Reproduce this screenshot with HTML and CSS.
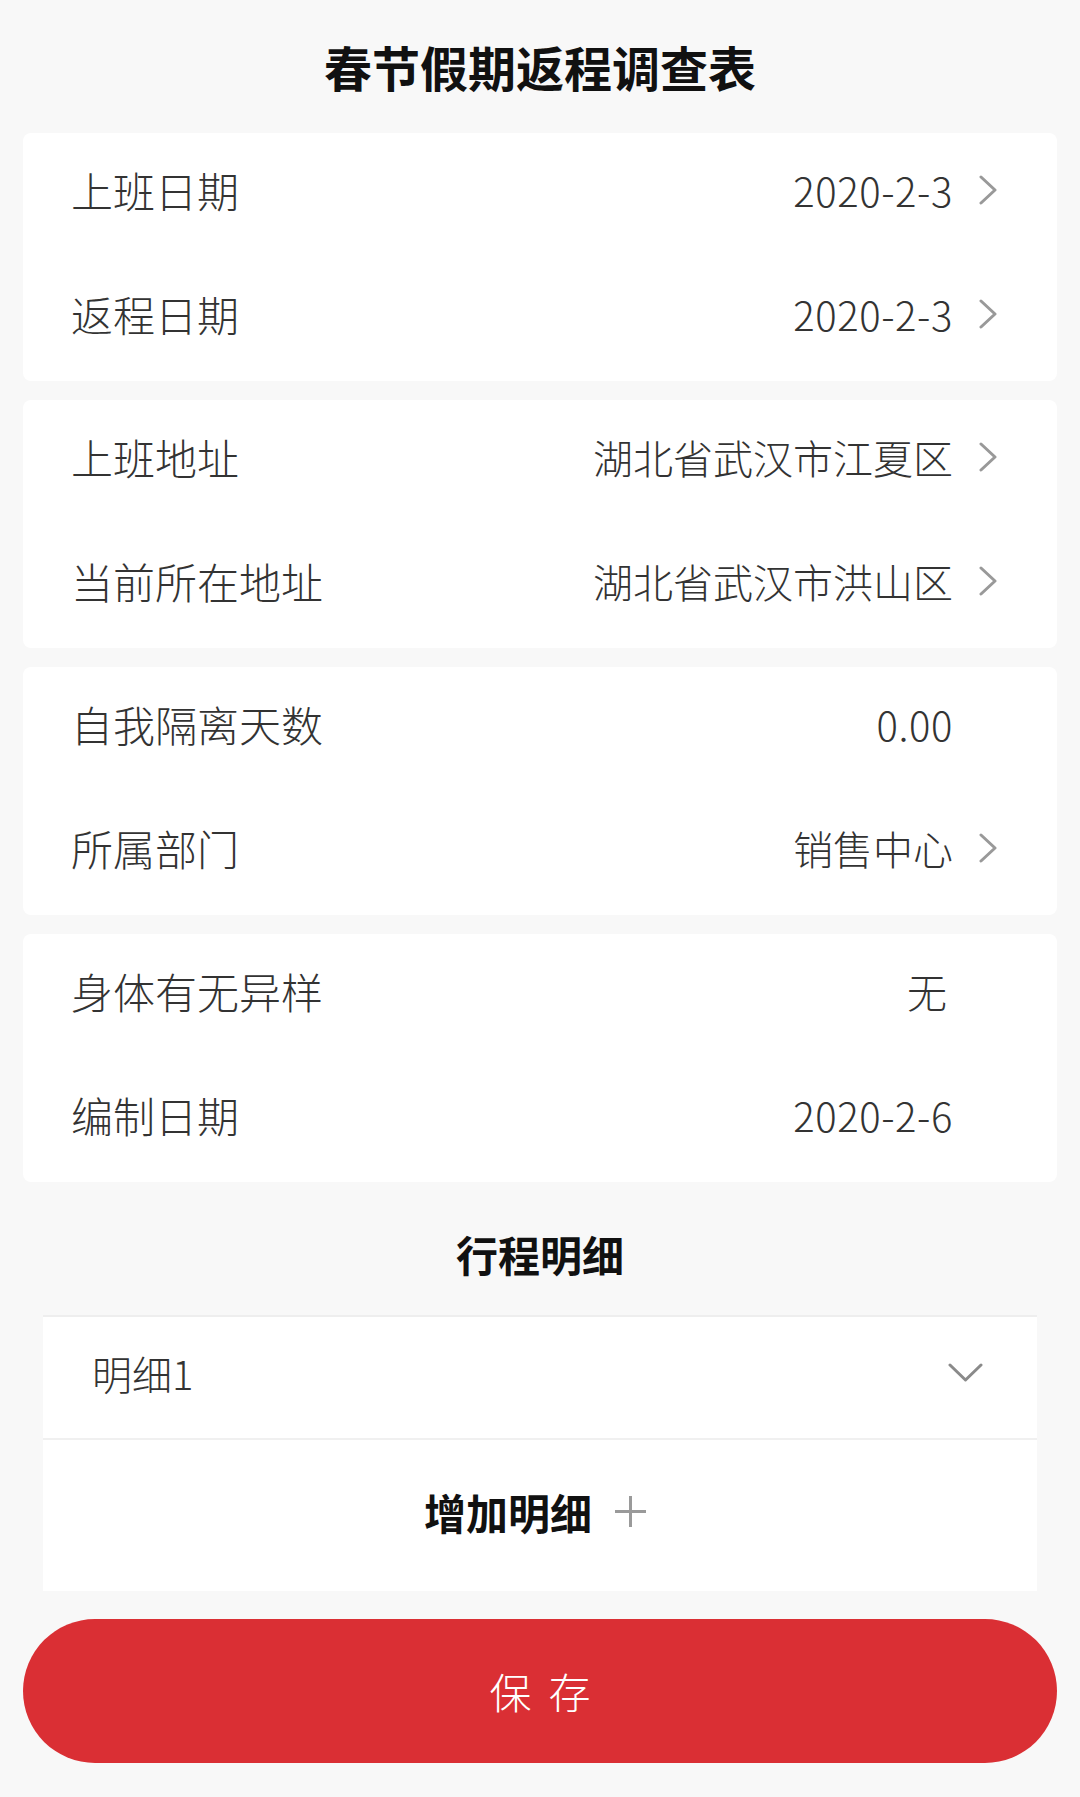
FILE: index.html
```html
<!DOCTYPE html>
<html lang="zh-CN">
<head>
<meta charset="utf-8">
<title>春节假期返程调查表</title>
<link rel="stylesheet" href="styles.css">
</head>
<body>
<div class="page">
  <header class="page-title">春节假期返程调查表</header>

  <section class="card">
    <div class="row"><span class="label">上班日期</span><span class="value num">2020-2-3</span><svg class="arrow" viewBox="0 0 18 30"><path d="M2 2 L16 15 L2 28"/></svg></div>
    <div class="row"><span class="label">返程日期</span><span class="value num">2020-2-3</span><svg class="arrow" viewBox="0 0 18 30"><path d="M2 2 L16 15 L2 28"/></svg></div>
  </section>

  <section class="card">
    <div class="row"><span class="label">上班地址</span><span class="value">湖北省武汉市江夏区</span><svg class="arrow" viewBox="0 0 18 30"><path d="M2 2 L16 15 L2 28"/></svg></div>
    <div class="row"><span class="label">当前所在地址</span><span class="value">湖北省武汉市洪山区</span><svg class="arrow" viewBox="0 0 18 30"><path d="M2 2 L16 15 L2 28"/></svg></div>
  </section>

  <section class="card">
    <div class="row"><span class="label">自我隔离天数</span><span class="value num">0.00</span><span class="arrow-space"></span></div>
    <div class="row"><span class="label">所属部门</span><span class="value">销售中心</span><svg class="arrow" viewBox="0 0 18 30"><path d="M2 2 L16 15 L2 28"/></svg></div>
  </section>

  <section class="card card-last">
    <div class="row"><span class="label">身体有无异样</span><span class="value value-inset">无</span><span class="arrow-space"></span></div>
    <div class="row"><span class="label">编制日期</span><span class="value num">2020-2-6</span><span class="arrow-space"></span></div>
  </section>

  <h2 class="section-title">行程明细</h2>

  <div class="detail">
    <div class="detail-item">
      <span class="detail-name">明细1</span>
      <svg class="arrow-down" viewBox="0 0 35 19"><path d="M2 2 L17.5 17 L33 2"/></svg>
    </div>
    <div class="detail-add">
      <span class="add-text">增加明细</span>
      <svg class="plus" viewBox="0 0 31 31"><path d="M15.5 0 V31 M0 15.5 H31"/></svg>
    </div>
  </div>

  <button class="save-btn" type="button">保存</button>
</div>
</body>
</html>
```

FILE: styles.css
```css
html, body {
  margin: 0;
  padding: 0;
  background: #f8f8f8;
}

body {
  font-family: "Noto Sans CJK SC", "Noto Sans", sans-serif;
  color: #333;
}

.page {
  width: 1080px;
  display: flex;
  flex-direction: column;
}

.page-title {
  height: 133px;
  box-sizing: border-box;
  padding-top: 42px;
  text-align: center;
  font-size: 48px;
  line-height: 48px;
  font-weight: 700;
  color: #111;
}

.card {
  margin: 0 23px 19px;
  background: #fff;
  border-radius: 8px;
  display: flex;
  flex-direction: column;
}

.card-last {
  margin-bottom: 0;
}

.row {
  height: 124px;
  box-sizing: border-box;
  display: flex;
  align-items: center;
  padding: 0 60px 10px 48px;
}

.label {
  flex: 1;
  font-size: 42px;
  line-height: 1;
  font-weight: 300;
  color: #333;
}

.value {
  font-size: 40px;
  line-height: 1;
  font-weight: 300;
  color: #333;
  margin-right: 26px;
}

.num {
  letter-spacing: 0.6px;
}

.value-inset {
  margin-right: 32px;
}

.arrow,
.arrow-space {
  width: 18px;
  height: 30px;
  flex: none;
}

.arrow path {
  fill: none;
  stroke: #999;
  stroke-width: 3;
  stroke-linecap: round;
  stroke-linejoin: round;
}

.section-title {
  margin: 0;
  padding: 48px 0 37px;
  text-align: center;
  font-size: 42px;
  line-height: 48px;
  font-weight: 700;
  color: #111;
}

.detail {
  margin: 0 43px;
  background: #fff;
  border-top: 2px solid #eeeeee;
  display: flex;
  flex-direction: column;
}

.detail-item {
  height: 123px;
  box-sizing: border-box;
  display: flex;
  align-items: center;
  padding: 0 54px 10px 49px;
  border-bottom: 2px solid #f0f0f0;
}

.detail-name {
  flex: 1;
  font-size: 40px;
  line-height: 1;
  font-weight: 300;
  color: #333;
}

.arrow-down {
  width: 35px;
  height: 19px;
}

.arrow-down path {
  fill: none;
  stroke: #8a8a8a;
  stroke-width: 3;
  stroke-linecap: round;
  stroke-linejoin: round;
}

.detail-add {
  height: 151px;
  box-sizing: border-box;
  padding: 0 10px 8px 0;
  display: flex;
  align-items: center;
  justify-content: center;
  gap: 23px;
}

.add-text {
  font-size: 42px;
  line-height: 1;
  font-weight: 700;
  color: #111;
}

.plus {
  width: 31px;
  height: 31px;
}

.plus path {
  fill: none;
  stroke: #9a9a9a;
  stroke-width: 3;
}

.save-btn {
  margin: 28px 23px 0;
  height: 144px;
  border: none;
  border-radius: 72px;
  background: #da2f34;
  color: #fff;
  font-family: "Noto Sans CJK SC", "Noto Sans", sans-serif;
  font-size: 42px;
  font-weight: 300;
  letter-spacing: 17px;
  text-indent: 17px;
  line-height: 1;
  padding: 0;
}
```
